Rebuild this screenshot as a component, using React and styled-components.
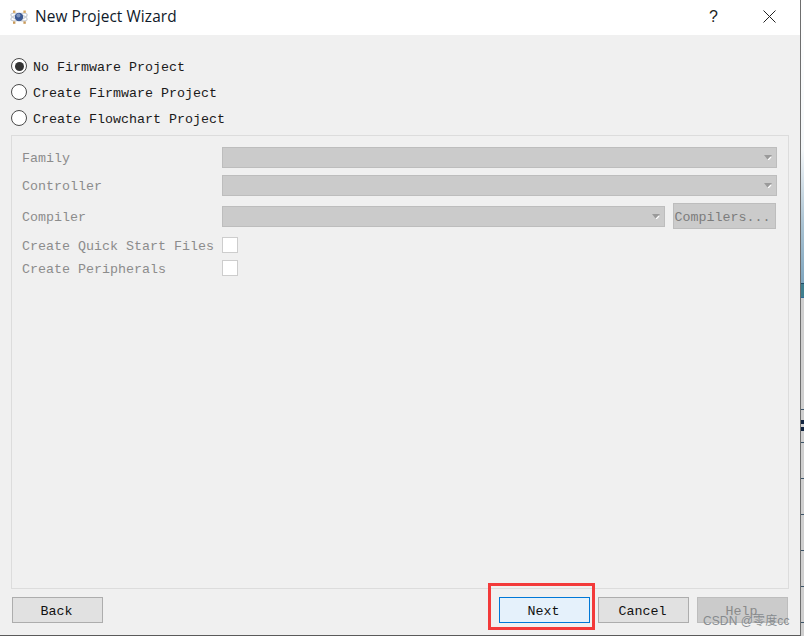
import React from "react";
import styled, { createGlobalStyle } from "styled-components";

const Global = createGlobalStyle`
  html, body { margin: 0; padding: 0; background: #fff; }
  #root { width: 804px; height: 636px; overflow: hidden; }
`;
const Screen = styled.div`
  width: 804px; height: 636px; display: flex; position: relative; overflow: hidden;
  font-family: "Liberation Mono", "DejaVu Sans Mono", monospace;
  font-size: 13.33px;
`;
const Dialog = styled.div`
  width: 801px; height: 636px; box-sizing: border-box; display: flex; flex-direction: column;
  background: #f0f0f0;
  border-right: 1px solid #6e6e6e; border-bottom: 1px solid #5a5a5a;
`;
const Strip = styled.div`
  width: 3px; height: 636px;
  background: linear-gradient(to bottom,
    #fff 0, #f4f7f9 150px, #a9c2d2 225px, #7fa6bf 283px,
    #1f4a66 283px, #1f4a66 284px, #3f7f8f 284px, #3f7f8f 297px,
    #2e6a9a 297px, #2e6a9a 298px, #cfcfcf 298px, #cfcfcf 409px,
    #3d5468 409px, #3d5468 410px, #cfcfcf 410px, #cfcfcf 420px,
    #10233f 420px, #10233f 424px, #cfcfcf 424px, #cfcfcf 427px,
    #10233f 427px, #10233f 431px, #cfcfcf 431px, #cfcfcf 442px,
    #3d5468 442px, #3d5468 443px, #cfcfcf 443px, #cfcfcf 478px,
    #3d5468 478px, #3d5468 479px, #cfcfcf 479px, #cfcfcf 514px,
    #3d5468 514px, #3d5468 515px, #cfcfcf 515px, #cfcfcf 550px,
    #3d5468 550px, #3d5468 551px, #cfcfcf 551px, #cfcfcf 586px,
    #3d5468 586px, #3d5468 587px, #cfcfcf 587px, #cfcfcf 622px,
    #3d5468 622px, #3d5468 623px, #cfcfcf 623px);
`;
const TitleBar = styled.header`
  height: 35px; flex: none; background: #fff; display: flex; align-items: center;
  padding: 0 0 2px 10px; box-sizing: border-box;
`;
const Title = styled.span`
  margin-left: 7px; font-family: "Open Sans", "Noto Sans", sans-serif; font-size: 15.4px; color: #0f1a2a;
  letter-spacing: 0.1px; flex: 1;
`;
const TitleAction = styled.span`
  font-family: "Liberation Sans", sans-serif; font-size: 16px; color: #222;
  margin-right: 45px;
`;
const CloseIcon = styled.svg`
  width: 13px; height: 13px; margin-right: 24px; flex: none;
`;
const Body = styled.main`
  flex: 1; display: flex; flex-direction: column; padding: 23px 12px 11px 11px; min-height: 0;
`;
const RadioGroup = styled.div`
  display: flex; flex-direction: column; gap: 10px; height: 77px; flex: none;
`;
const RadioRow = styled.label`
  display: flex; align-items: center; height: 16px; color: #1a1a1a;
`;
const RadioText = styled.span`
  padding-top: 2px;
`;
const RadioMark = styled.span`
  width: 16px; height: 16px; box-sizing: border-box; border-radius: 50%; border: 1.5px solid #4a4a4a;
  background: #fff; display: flex; align-items: center; justify-content: center; margin-right: 6px;
  flex: none;
  &::after {
    content: ""; display: ${p => (p.$on ? "block" : "none")};
    width: 9px; height: 9px; border-radius: 50%; background: #333;
  }
`;
const Panel = styled.section`
  height: 454px; flex: none; width: 778px; box-sizing: border-box; border: 1px solid #dcdcdc;
  padding: 11px 11px 0 10px;
  color: #8c8c8c;
`;
const FieldRow = styled.div`
  display: flex; align-items: center; height: ${p => p.$h || 21}px; margin-top: ${p => p.$mt || 0}px;
  margin-right: ${p => p.$mr || 0}px;
`;
const Label = styled.span`
  width: 200px; flex: none; white-space: nowrap; padding-top: 2px;
`;
const Select = styled.div`
  flex: 1; height: 21px; box-sizing: border-box; background: #cbcbcb; border: 1px solid #bdbdbd;
  display: flex; align-items: center; justify-content: flex-end; padding-right: 4px;
`;
const Caret = styled.svg`
  width: 8px; height: 5px; flex: none;
`;
const CompilersButton = styled.div`
  width: 103px; height: 26px; flex: none; margin-left: 8px; box-sizing: border-box; background: #cbcbcb;
  border: 1px solid #bdbdbd; display: flex; align-items: center; justify-content: center; color: #7c7c7c;
  padding: 2px 4px 0 0;
`;
const Check = styled.span`
  width: 16px; height: 16px; box-sizing: border-box; background: #fff; border: 1px solid #cdcdcd; flex: none;
`;
const Footer = styled.footer`
  display: flex; margin-top: 8px; height: 26px; padding-left: 1px; flex: none;
`;
const Spacer = styled.div`flex: 1;`;
const Btn = styled.button`
  width: 91px; height: 26px; box-sizing: border-box; margin-left: ${p => p.$ml || 0}px; padding: 2px 2px 0 0;
  font: inherit; color: ${p => (p.$disabled ? "#8a8a8a" : "#111")};
  background: ${p => (p.$primary ? "#e5f1fb" : p.$disabled ? "#cbcbcb" : "#e1e1e1")};
  border: 1px solid ${p => (p.$primary ? "#0078d7" : p.$disabled ? "#bdbdbd" : "#adadad")};
`;
const Highlight = styled.div`
  position: absolute; left: 488px; top: 583px; width: 107px; height: 47px; box-sizing: border-box;
  border: 3px solid #f33a3a; pointer-events: none;
`;
const Watermark = styled.div`
  position: absolute; left: 703px; top: 613px; font-family: "Liberation Sans", "Noto Sans CJK SC", sans-serif;
  font-size: 12px; line-height: 16px; color: rgba(120,125,130,0.85); white-space: nowrap; letter-spacing: 0.1px;
`;

const Logo = () => (
  <svg width="18" height="16" viewBox="0 0 18 16" style={{ flex: "none" }}>
    <ellipse cx="9" cy="8" rx="8.5" ry="3" fill="none" stroke="#c9ced6" strokeWidth="1.2" transform="rotate(18 9 8)" />
    <ellipse cx="9" cy="8" rx="8.5" ry="3" fill="none" stroke="#c9ced6" strokeWidth="1.2" transform="rotate(-18 9 8)" />
    <circle cx="9" cy="8" r="4.2" fill="#3d5a94" />
    <circle cx="8.4" cy="6.6" r="2" fill="#7f95bd" />
    <rect x="3" y="1.5" width="2.4" height="2.4" fill="#d9a860" />
    <rect x="13.4" y="1.5" width="2.4" height="2.4" fill="#d9a860" />
    <rect x="3" y="12.4" width="2.4" height="2.4" fill="#c99a5a" />
    <rect x="13.4" y="12.4" width="2.4" height="2.4" fill="#c99a5a" />
  </svg>
);
const DownCaret = () => (
  <Caret viewBox="0 0 8 5">
    <path d="M0 0H8L4 5Z" fill="#9a9a9a" />
    <path d="M4 5L7 2" stroke="#fff" strokeWidth="1.3" />
  </Caret>
);

export default function App() {
  return (
    <Screen>
      <Global />
      <Dialog>
        <TitleBar>
          <Logo />
          <Title>New Project Wizard</Title>
          <TitleAction>?</TitleAction>
          <CloseIcon viewBox="0 0 13 13">
            <path d="M0.5 0.5L12.5 12.5M12.5 0.5L0.5 12.5" stroke="#222" strokeWidth="1" fill="none" />
          </CloseIcon>
        </TitleBar>
        <Body>
          <RadioGroup>
            <RadioRow><RadioMark $on /><RadioText>No Firmware Project</RadioText></RadioRow>
            <RadioRow><RadioMark /><RadioText>Create Firmware Project</RadioText></RadioRow>
            <RadioRow><RadioMark /><RadioText>Create Flowchart Project</RadioText></RadioRow>
          </RadioGroup>
          <Panel>
            <FieldRow>
              <Label>Family</Label>
              <Select><DownCaret /></Select>
            </FieldRow>
            <FieldRow $mt={7}>
              <Label>Controller</Label>
              <Select><DownCaret /></Select>
            </FieldRow>
            <FieldRow $h={26} $mt={7} $mr={1}>
              <Label>Compiler</Label>
              <Select><DownCaret /></Select>
              <CompilersButton>Compilers...</CompilersButton>
            </FieldRow>
            <FieldRow $h={16} $mt={8}>
              <Label>Create Quick Start Files</Label>
              <Check />
            </FieldRow>
            <FieldRow $h={16} $mt={7}>
              <Label>Create Peripherals</Label>
              <Check />
            </FieldRow>
          </Panel>
          <Footer>
            <Btn>Back</Btn>
            <Spacer />
            <Btn $primary>Next</Btn>
            <Btn $ml={8}>Cancel</Btn>
            <Btn $ml={8} $disabled>Help</Btn>
          </Footer>
        </Body>
      </Dialog>
      <Strip />
      <Highlight />
      <Watermark>CSDN @零度cc</Watermark>
    </Screen>
  );
}
